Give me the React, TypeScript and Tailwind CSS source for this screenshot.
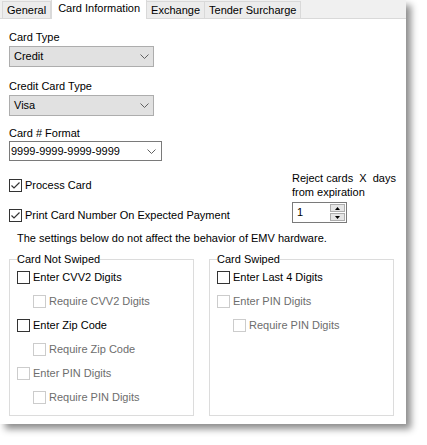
import React from "react";

const font = { fontFamily: '"Liberation Sans", Arial, sans-serif' };

function Chevron({ className = "" }: { className?: string }) {
  return (
    <svg width="9" height="5" viewBox="0 0 9 5" className={className}>
      <polyline points="0.5,0.5 4.5,4.5 8.5,0.5" fill="none" stroke="#606060" strokeWidth="1" />
    </svg>
  );
}

function Check({ checked = false, disabled = false }: { checked?: boolean; disabled?: boolean }) {
  return (
    <span
      className={`w-[13px] h-[13px] shrink-0 border bg-white flex items-center justify-center ${
        disabled ? "border-[#cccccc]" : "border-[#333333]"
      }`}
    >
      {checked && (
        <svg width="11" height="11" viewBox="0 0 11 11">
          <polyline points="1.5,5.5 4,8 9.5,2.5" fill="none" stroke="#333" strokeWidth="1.2" />
        </svg>
      )}
    </span>
  );
}

function CheckRow({
  label,
  checked,
  disabled,
  indent,
}: {
  label: string;
  checked?: boolean;
  disabled?: boolean;
  indent?: boolean;
}) {
  return (
    <div className={`h-[24px] flex items-center gap-[3px] ${indent ? "pl-[16px]" : ""}`}>
      <Check checked={checked} disabled={disabled} />
      <span className={disabled ? "text-[#6d6d6d]" : "text-black"}>{label}</span>
    </div>
  );
}

function Select({ value }: { value: string }) {
  return (
    <div className="mt-[1px] w-[145px] h-[21px] bg-[#e1e1e1] border border-[#adadad] flex items-center justify-between pl-[4px] pr-[4px]">
      <span>{value}</span>
      <Chevron />
    </div>
  );
}

const tabs = ["General", "Card Information", "Exchange", "Tender Surcharge"];

export default function App() {
  return (
    <div className="w-[427px] h-[445px] bg-white text-[11px] leading-[15px] text-black" style={font}>
      <div className="w-[406px] h-[424px] bg-white shadow-[5px_5px_7px_rgba(0,0,0,0.45)] flex flex-col">
        {/* Tabs */}
        <div className="h-[19px] bg-[#f0f0f0] border-b border-[#d9d9d9] flex items-end pl-[2px] shrink-0">
          {tabs.map((t) =>
            t === "Card Information" ? (
              <div
                key={t}
                className="h-[20px] -mb-[1px] bg-white border border-b-0 border-[#d9d9d9] px-[6px] flex items-start pt-[1px] relative z-10"
              >
                {t}
              </div>
            ) : (
              <div
                key={t}
                className="h-[17px] bg-[#ececec] border border-b-0 border-[#d9d9d9] -ml-[1px] first:ml-0 px-[4px] flex items-center"
              >
                {t}
              </div>
            )
          )}
        </div>

        {/* Content */}
        <div className="px-[9px] flex flex-col">
          <div className="mt-[11px]">Card Type</div>
          <Select value="Credit" />

          <div className="mt-[12px]">Credit Card Type</div>
          <Select value="Visa" />

          <div className="mt-[10px]">Card # Format</div>
          <div className="w-[153px] h-[20px] bg-white border border-[#7a7a7a] flex items-center justify-between pl-[1px] pr-[5px]">
            <span>9999-9999-9999-9999</span>
            <Chevron />
          </div>

          <div className="flex">
            <div className="w-[283px] flex flex-col">
              <div className="mt-[17px] h-[15px] flex items-center gap-[3px]">
                <Check checked />
                <span>Process Card</span>
              </div>
              <div className="mt-[15px] h-[15px] flex items-center gap-[3px]">
                <Check checked />
                <span>Print Card Number On Expected Payment</span>
              </div>
            </div>
            <div className="flex flex-col">
              <div className="mt-[10px] leading-[14px] whitespace-nowrap">
                Reject cards&nbsp; X&nbsp; days
                <br />
                from expiration
              </div>
              <div className="mt-[3px] w-[55px] h-[21px] border border-[#7a7a7a] flex items-center justify-between pl-[4px] pr-[1px]">
                <span>1</span>
                <div className="flex flex-col gap-[1px]">
                  <div className="w-[15px] h-[8px] bg-[#e5e5e5] border border-[#adadad] flex items-center justify-center">
                    <svg width="5" height="3" viewBox="0 0 5 3">
                      <polygon points="2.5,0 5,3 0,3" fill="#000" />
                    </svg>
                  </div>
                  <div className="w-[15px] h-[8px] bg-[#e5e5e5] border border-[#adadad] flex items-center justify-center">
                    <svg width="5" height="3" viewBox="0 0 5 3">
                      <polygon points="0,0 5,0 2.5,3" fill="#000" />
                    </svg>
                  </div>
                </div>
              </div>
            </div>
          </div>

          <div className="mt-[8px] pl-[8px]">The settings below do not affect the behavior of EMV hardware.</div>

          <div className="mt-[6px] flex gap-[15px]">
            <fieldset className="w-[185px] h-[164px] border border-[#dcdcdc] px-[7px]">
              <legend>Card Not Swiped</legend>
              <div className="-mt-[2px]">
                <CheckRow label="Enter CVV2 Digits" />
                <CheckRow label="Require CVV2 Digits" disabled indent />
                <CheckRow label="Enter Zip Code" />
                <CheckRow label="Require Zip Code" disabled indent />
                <CheckRow label="Enter PIN Digits" disabled />
                <CheckRow label="Require PIN Digits" disabled indent />
              </div>
            </fieldset>
            <fieldset className="w-[185px] h-[164px] border border-[#dcdcdc] px-[7px]">
              <legend>Card Swiped</legend>
              <div className="-mt-[2px]">
                <CheckRow label="Enter Last 4 Digits" />
                <CheckRow label="Enter PIN Digits" disabled />
                <CheckRow label="Require PIN Digits" disabled indent />
              </div>
            </fieldset>
          </div>
        </div>
      </div>
    </div>
  );
}
